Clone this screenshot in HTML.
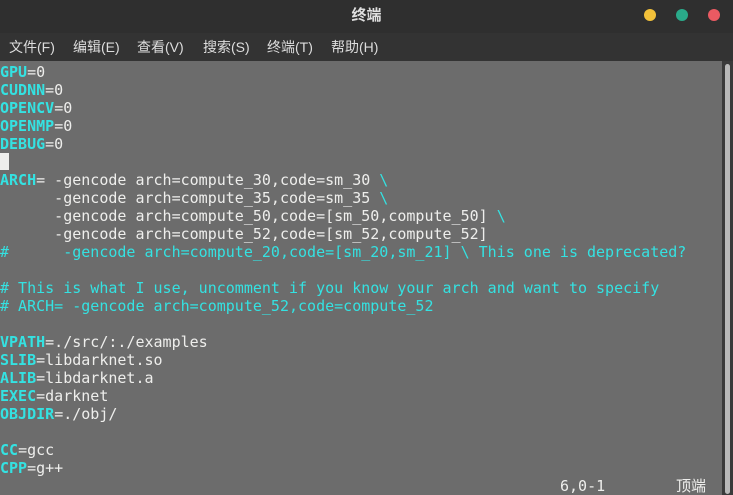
<!DOCTYPE html>
<html><head><meta charset="utf-8"><style>
body{margin:0;width:733px;height:495px;overflow:hidden;background:#6c6c6c;font-family:"Liberation Sans","Noto Sans CJK SC",sans-serif}
#title{position:absolute;left:0;top:0;width:733px;height:33px;background:#2f2f2f;color:#e0e0e0;font-size:15px;font-weight:bold;text-align:center;line-height:32px}
.dot{position:absolute;top:9px;width:12px;height:12px;border-radius:50%}
#menu{position:absolute;left:0;top:33px;width:733px;height:28px;background:#333;color:#ddd;font-size:14px;line-height:28px}
#menu span{position:absolute;top:0}
#term{position:absolute;left:0;top:63px;width:722px;height:432px;font-family:"DejaVu Sans Mono","Noto Sans CJK SC",monospace;font-size:15px;line-height:18px;color:#eeeeec;white-space:pre}
#sb{position:absolute;left:722px;top:61px;width:11px;height:434px;background:#3a3a3a}
#thumb{position:absolute;left:3px;top:3px;width:5px;height:430px;background:#b8b8b8;border-radius:3px}
.k{color:#34e2e2;font-weight:bold}.c{color:#34e2e2}
.cur{display:inline-block;width:9px;height:17px;background:#eeeeec;vertical-align:top}
</style></head><body>
<div id="title">终端</div>
<div class="dot" style="left:644px;background:#f2c13a"></div>
<div class="dot" style="left:676px;background:#2aaa8a"></div>
<div class="dot" style="left:708px;background:#ea5a62"></div>
<div id="menu"><span style="left:9px">文件(F)</span><span style="left:73px">编辑(E)</span><span style="left:137px">查看(V)</span><span style="left:203px">搜索(S)</span><span style="left:267px">终端(T)</span><span style="left:331px">帮助(H)</span></div>
<div id="sb"><div id="thumb"></div></div>
<div id="term"><span class="k">GPU</span>=0
<span class="k">CUDNN</span>=0
<span class="k">OPENCV</span>=0
<span class="k">OPENMP</span>=0
<span class="k">DEBUG</span>=0
<span class="cur"></span>
<span class="k">ARCH</span>= -gencode arch=compute_30,code=sm_30 <span class="c">\</span>
      -gencode arch=compute_35,code=sm_35 <span class="c">\</span>
      -gencode arch=compute_50,code=[sm_50,compute_50] <span class="c">\</span>
      -gencode arch=compute_52,code=[sm_52,compute_52]
<span class="c">#      -gencode arch=compute_20,code=[sm_20,sm_21] \ This one is deprecated?</span>

<span class="c"># This is what I use, uncomment if you know your arch and want to specify</span>
<span class="c"># ARCH= -gencode arch=compute_52,code=compute_52</span>

<span class="k">VPATH</span>=./src/:./examples
<span class="k">SLIB</span>=libdarknet.so
<span class="k">ALIB</span>=libdarknet.a
<span class="k">EXEC</span>=darknet
<span class="k">OBJDIR</span>=./obj/

<span class="k">CC</span>=gcc
<span class="k">CPP</span>=g++
<span style="position:absolute;left:560px">6,0-1</span><span style="position:absolute;left:676px">顶端</span></div>
</body></html>
